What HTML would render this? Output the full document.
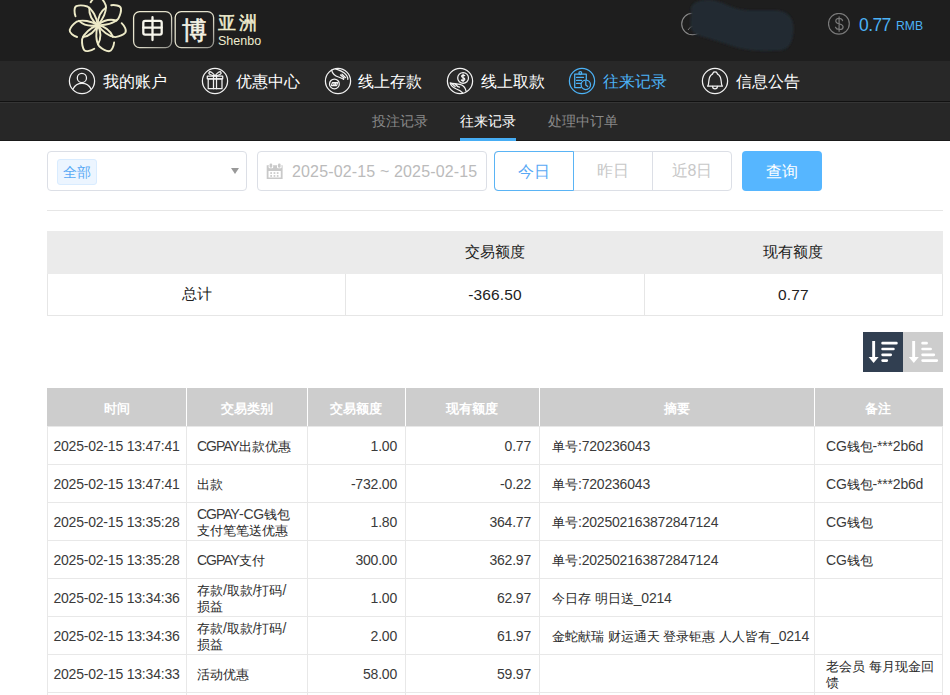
<!DOCTYPE html>
<html><head><meta charset="utf-8">
<style>
*{box-sizing:border-box;margin:0;padding:0}
html,body{width:950px;height:695px;overflow:hidden;background:#fff;font-family:"Liberation Sans",sans-serif;color:#333}
.abs{position:absolute}
#top{position:absolute;left:0;top:0;width:950px;height:61px;background:#1e1e1e}
#nav{position:absolute;left:0;top:61px;width:950px;height:40px;background:#282828}
#navline{position:absolute;left:0;top:101px;width:950px;height:1px;background:#111;box-shadow:0 1px 0 #353535}
#sub{position:absolute;left:0;top:102px;width:950px;height:39px;background:#272727;border-bottom:1px solid #1a1a1a}
.ni{position:absolute;top:67px;width:27px;height:27px}
.nt{position:absolute;top:71px;font-size:16px;line-height:22px;color:#fff;white-space:nowrap;letter-spacing:0;font-weight:500}
.st{position:absolute;top:110px;font-size:14px;line-height:22px;color:#8a8a8a;white-space:nowrap;font-weight:500}
.box{position:absolute;border:1px solid #dcdfe6;border-radius:4px;background:#fff}
.btn{position:absolute;top:151px;height:40px;font-size:16px;line-height:38px;padding-top:1px;text-align:center;color:#c8c8c8}
table{border-collapse:collapse;position:absolute}
#sum{left:47px;top:231px;width:896px;table-layout:fixed}
#sum td{border:1px solid #e6e6e6;height:42px;text-align:center;font-size:15px;color:#222}
#sum td.n{font-size:15.5px;letter-spacing:0.1px}
#sum tr.h td{background:#ebebeb;border-color:#ebebeb}
.th{position:absolute;top:388px;height:38px;line-height:38px;padding-top:2px;text-align:center;color:#fff;font-weight:bold;font-size:13px}
.td{position:absolute;font-size:14px;line-height:17px;color:#3a3a3a;white-space:nowrap;letter-spacing:-0.2px}
.td .z{font-size:13px;letter-spacing:0;line-height:10px;font-weight:500;color:#2a2a2a}
.tm{text-align:center}
.td.two{line-height:16px}
.cg{letter-spacing:-1px}
</style></head><body>
<div id="top"></div>
<div id="nav"></div>
<div id="sub"></div>
<div id="navline"></div>

<!-- logo -->
<svg class="abs" style="left:66px;top:0" width="64" height="58" viewBox="-31.8 -25 64 58">
 <g fill="none" stroke="#eeebc8" stroke-width="1.9" stroke-linecap="round">
  <g id="arm"><path d="M-22.3,-8.7 C-23.5,-12 -24,-17.5 -21.5,-18.8 C-19,-19.8 -13.5,-19.4 -10.4,-18.5 C-5,-15.5 -1.2,-7.5 0,0"/><path d="M0,0 C-4.5,-3.5 -9,-10 -8.5,-17.3"/></g>
  <use href="#arm" transform="rotate(51.43)"/><use href="#arm" transform="rotate(102.86)"/><use href="#arm" transform="rotate(154.29)"/><use href="#arm" transform="rotate(205.71)"/><use href="#arm" transform="rotate(257.14)"/><use href="#arm" transform="rotate(308.57)"/>
 </g>
</svg>
<svg class="abs" style="left:128px;top:6px" width="92" height="48" viewBox="128 6 92 48">
<defs><linearGradient id="bd" x1="0" y1="0" x2="1" y2="1"><stop offset="0" stop-color="#f3f0d6"/><stop offset="0.6" stop-color="#d8d6c4"/><stop offset="1" stop-color="#8e8e88"/></linearGradient></defs>
<rect x="133.6" y="11.6" width="38" height="36" rx="6" fill="none" stroke="url(#bd)" stroke-width="1.3"/>
<rect x="175.2" y="11.6" width="38.4" height="36" rx="6" fill="none" stroke="url(#bd)" stroke-width="1.3"/>
<g fill="none" stroke="#f7f6ec" stroke-width="2.3" stroke-linecap="round" stroke-linejoin="round">
<rect x="143.3" y="20.9" width="18.4" height="13.7" rx="1.8"/><path d="M143.3,27.6 H161.7 M152.5,17.2 V40"/>
</g></svg>
<div class="abs" style="left:181.5px;top:13.5px;font-size:25px;line-height:32px;color:#f4f2e4;-webkit-text-stroke:0.6px #f4f2e4">博</div>
<div class="abs" style="left:218px;top:12px;font-size:18px;line-height:22px;color:#f0edcf;letter-spacing:3px;-webkit-text-stroke:0.5px #f0edcf">亚洲</div>
<div class="abs" style="left:218px;top:33px;font-size:12.5px;line-height:16px;color:#f0edcf">Shenbo</div>

<!-- header right -->
<svg class="abs" style="left:670px;top:0" width="130" height="60" viewBox="670 0 130 60">
<defs><filter id="bl" x="-10%" y="-20%" width="120%" height="140%"><feGaussianBlur stdDeviation="1.2"/></filter>
<radialGradient id="bg1" cx="0.55" cy="0.5" r="0.6"><stop offset="0" stop-color="#1f2a32"/><stop offset="1" stop-color="#232a30"/></radialGradient></defs>
<circle cx="692.5" cy="24" r="10.8" fill="none" stroke="#8a8a8a" stroke-width="1.1"/>
<path d="M688,30 Q690,26 694,26" fill="none" stroke="#777" stroke-width="1"/>
<path filter="url(#bl)" fill="#212a31" d="M691,8 C693,2 700,-1 712,0 C725,2 732,9 745,10 C755,11 765,9.5 778,10.5 C790,12 794,20 793.5,30 C793,42 789,50 780,50.5 C765,51.5 750,51 738,48 C725,44 715,40 703,37 C693,35 690,30 690.5,22 Z"/>
</svg>
<svg class="abs" style="left:828px;top:13px" width="23" height="23" viewBox="0 0 23 23"><g fill="none" stroke="#7a7a7a" stroke-width="1.2" stroke-linecap="round"><circle cx="10.9" cy="10.8" r="10.4"/><path d="M14.6,7.6 C14,5.8 12.3,5.2 10.8,5.3 C8.9,5.4 7.7,6.5 7.8,8.2 C7.9,10.1 10,10.6 11.6,11 C13.6,11.5 15.2,12.2 15.1,14.1 C15,15.9 13.2,16.6 11.2,16.5 C9.3,16.4 8,15.6 7.5,14.2 M11.1,3.9 V18.3"/></g></svg>
<div class="abs" style="left:859px;top:13.5px;font-size:17.5px;line-height:22px;color:#4cb2f6;letter-spacing:-0.6px">0.77</div>
<div class="abs" style="left:896px;top:17px;font-size:12.2px;line-height:18px;color:#4cb2f6">RMB</div>

<!-- nav -->
<svg class="abs" style="left:66px;top:65px" width="32" height="32" viewBox="0 0 32 32"><g fill="none" stroke="#f2f2f2" stroke-width="1.25" stroke-linecap="round" stroke-linejoin="round"><circle cx="16" cy="16" r="12.6"/><circle cx="15.9" cy="12.9" r="4.6"/><path d="M7,23.9 A10,10 0 0 1 25,23.9"/></g></svg>
<svg class="abs" style="left:199px;top:65px" width="32" height="32" viewBox="0 0 32 32"><g fill="none" stroke="#f2f2f2" stroke-width="1.25" stroke-linecap="round" stroke-linejoin="round"><circle cx="16" cy="16" r="12.6"/><rect x="8.3" y="11" width="15.4" height="2.8"/><rect x="9.2" y="13.8" width="13.8" height="9.9"/><path d="M14.5,11V23.7M17.5,11V23.7"/><path d="M15.2,10.8 C12,10.5 9,9 10,7.3 C11,5.8 13.5,7.5 16,10.8 C18.5,7.5 21,5.8 22,7.3 C23,9 20,10.5 16.8,10.8"/></g></svg>
<svg class="abs" style="left:322px;top:65px" width="32" height="32" viewBox="0 0 32 32"><g fill="none" stroke="#f2f2f2" stroke-width="1.25" stroke-linecap="round" stroke-linejoin="round"><circle cx="16" cy="16" r="12.6"/><circle cx="12.4" cy="18.9" r="4.9"/><path d="M9.4,20.6 L10.4,17.6 H15.6 L14.6,20.6 Z M11.5,20.6 L12.3,17.8 M13,20.6 L13.8,17.8"/><path d="M9.6,5.2 C10.5,9 12.5,11 16.5,12 C19,12.6 20,13.5 21.6,14.4 M13.6,3.8 C16,4.8 19.5,6 22,7.8 C24.5,9.8 26,12 25.8,14.3 M18.5,10 L22,13 M20,9.2 L23.6,12.6"/></g></svg>
<svg class="abs" style="left:444px;top:65px" width="32" height="32" viewBox="0 0 32 32"><g fill="none" stroke="#f2f2f2" stroke-width="1.25" stroke-linecap="round" stroke-linejoin="round"><circle cx="16" cy="16" r="12.6"/><circle cx="19.1" cy="12.9" r="5.4"/><path d="M20.7,10.6 C20,9.7 17.6,9.8 17.6,11.3 C17.6,12.8 20.8,12.5 20.8,14.3 C20.8,15.8 18.2,16 17.4,15 M19.1,9 V16.8"/><path d="M6.2,17.8 C6.8,20.5 9,22.5 12.5,24 C15,25 17,26 18.4,27.6 M6.2,17.8 C9,18.6 12.5,18.6 16,19.4 C19.3,20.2 21.4,22.8 22.2,26.4 M7.6,18.6 L11.2,21.4 M10.2,18.6 L13.6,21.2 M13.2,21.4 L15.5,22.2"/></g></svg>
<svg class="abs" style="left:566px;top:65px" width="32" height="32" viewBox="0 0 32 32"><g fill="none" stroke="#4cb2f6" stroke-width="1.25" stroke-linecap="round" stroke-linejoin="round"><circle cx="16" cy="16" r="12.6"/><path d="M20.3,14.6 V9.2 H8.7 V22.6 H15"/><circle cx="14.3" cy="8.1" r="1.4"/><path d="M10.6,12.4 H17.5 M10.6,15.4 H15.5 M10.6,18.4 H14.5"/><circle cx="19.8" cy="19.8" r="4.7"/><path d="M19.8,16.3 V19.9 L21.7,21.5"/></g></svg>
<svg class="abs" style="left:699px;top:65px" width="32" height="32" viewBox="0 0 32 32"><g fill="none" stroke="#f2f2f2" stroke-width="1.25" stroke-linecap="round" stroke-linejoin="round"><circle cx="16" cy="16" r="12.6"/><path d="M8.6,21.2 H23.4 L22.6,19.5 C22,16 22.4,12.5 20.2,10.4 C19.2,9.5 18.4,9.4 18,8 C17.5,6.6 14.5,6.6 14,8 C13.6,9.4 12.8,9.5 11.8,10.4 C9.6,12.5 10,16 9.4,19.5 Z"/><path d="M13.6,21.4 A2.4,2.4 0 0 0 18.4,21.4"/></g></svg>
<div class="nt" style="left:103px">我的账户</div>
<div class="nt" style="left:236px">优惠中心</div>
<div class="nt" style="left:358px">线上存款</div>
<div class="nt" style="left:481px">线上取款</div>
<div class="nt" style="left:603px;color:#4cb2f6">往来记录</div>
<div class="nt" style="left:736px">信息公告</div>

<!-- sub nav -->
<div class="st" style="left:372px">投注记录</div>
<div class="st" style="left:460px;color:#fff">往来记录</div>
<div class="abs" style="left:460px;top:138px;width:56px;height:3px;background:#46adf4"></div>
<div class="st" style="left:548px">处理中订单</div>

<!-- filter row -->
<div class="box" style="left:47px;top:151px;width:200px;height:40px"></div>
<div class="abs" style="left:57px;top:159px;width:40px;height:26px;background:#ecf5ff;border:1px solid #d9ecff;border-radius:3px;font-size:14px;line-height:24px;color:#58a9f5;text-align:center">全部</div>
<div class="abs" style="left:231px;top:168px;width:0;height:0;border-left:4px solid transparent;border-right:4px solid transparent;border-top:6px solid #999"></div>

<div class="box" style="left:257px;top:151px;width:230px;height:40px"></div>
<svg class="abs" style="left:262px;top:158px" width="26" height="26" viewBox="0 0 26 26">
<path fill="#c9c9c9" fill-rule="evenodd" d="M4.7,7.3 H20.6 V21 H4.7 Z M6.5,13 V19.4 H18.8 V13 Z"/>
<g fill="#fff"><rect x="6.6" y="7" width="4.6" height="3.3" rx="1"/><rect x="15" y="7" width="4.6" height="3.3" rx="1"/></g>
<g fill="#c9c9c9"><rect x="7.6" y="5.6" width="2.6" height="4.2" rx="1.2"/><rect x="16" y="5.6" width="2.6" height="4.2" rx="1.2"/>
<rect x="8.3" y="14.2" width="1.7" height="1.7"/><rect x="11.6" y="14.2" width="1.7" height="1.7"/><rect x="14.8" y="14.2" width="1.7" height="1.7"/>
<rect x="8.3" y="17.1" width="1.7" height="1.7"/><rect x="11.6" y="17.1" width="1.7" height="1.7"/><rect x="14.8" y="17.1" width="1.7" height="1.7"/></g>
</svg>
<div class="abs" style="left:292px;top:161px;font-size:16px;line-height:22px;color:#bbb;white-space:nowrap;letter-spacing:0.15px">2025-02-15 ~ 2025-02-15</div>

<div class="box" style="left:494px;top:151px;width:238px;height:40px"></div>
<div class="abs" style="left:573px;top:152px;width:1px;height:38px;background:#dcdfe6"></div>
<div class="abs" style="left:652px;top:152px;width:1px;height:38px;background:#dcdfe6"></div>
<div class="btn" style="left:494px;width:80px;border:1px solid #5ab4f5;border-radius:4px 0 0 4px;color:#58a9f5">今日</div>
<div class="btn" style="left:573px;width:80px">昨日</div>
<div class="btn" style="left:652px;width:80px">近8日</div>
<div class="btn" style="left:742px;width:80px;background:#56b6ff;border-radius:4px;color:#fff;line-height:40px">查询</div>

<div class="abs" style="left:47px;top:210px;width:896px;height:1px;background:#e6e6e6"></div>

<table id="sum">
<tr class="h"><td></td><td>交易额度</td><td>现有额度</td></tr>
<tr><td>总计</td><td class="n">-366.50</td><td class="n">0.77</td></tr>
</table>

<svg class="abs" style="left:863px;top:332px" width="80" height="40" viewBox="0 0 80 40">
<rect x="0" y="0" width="40" height="40" fill="#313f51"/><rect x="40" y="0" width="40" height="40" fill="#cdcdcd"/>
<g fill="#fff"><rect x="9.2" y="9" width="2.9" height="17"/><path d="M5.6,25 H15.6 L10.6,31 Z"/>
<rect x="49.2" y="9" width="2.9" height="17"/><path d="M45.8,25 H55.8 L50.8,31 Z"/></g>
<g stroke="#fff" stroke-width="2.7" stroke-linecap="round">
<path d="M19.6,11.2 H33.4 M19.6,17 H30.4 M19.6,22.8 H27.7 M19.6,28.6 H23.8"/>
<path d="M59.6,11.2 H63.6 M59.6,17 H67.6 M59.6,22.8 H70.8 M59.6,28.6 H73.8"/>
</g></svg>

<!-- main table -->
<div class="abs" style="left:47px;top:388px;width:896px;height:38px;background:#cdcdcd"></div>
<div class="th" style="left:47px;width:139px">时间</div>
<div class="th" style="left:186px;width:121px">交易类别</div>
<div class="abs" style="left:186px;top:388px;width:1px;height:38px;background:#fff"></div>
<div class="th" style="left:307px;width:98px">交易额度</div>
<div class="abs" style="left:307px;top:388px;width:1px;height:38px;background:#fff"></div>
<div class="th" style="left:405px;width:134px">现有额度</div>
<div class="abs" style="left:405px;top:388px;width:1px;height:38px;background:#fff"></div>
<div class="th" style="left:539px;width:275px">摘要</div>
<div class="abs" style="left:539px;top:388px;width:1px;height:38px;background:#fff"></div>
<div class="th" style="left:814px;width:128px">备注</div>
<div class="abs" style="left:814px;top:388px;width:1px;height:38px;background:#fff"></div>
<div class="td tm" style="left:47px;width:139px;top:438px">2025-02-15 13:47:41</div>
<div class="td" style="left:197px;top:438px"><span class=cg>CGPAY</span><span class="z">出款优惠</span></div>
<div class="td" style="right:553px;top:438px;text-align:right">1.00</div>
<div class="td" style="right:419px;top:438px;text-align:right">0.77</div>
<div class="td" style="left:552px;top:438px"><span class="z">单号</span>:720236043</div>
<div class="td" style="left:826px;top:438px">CG<span class="z">钱包</span>-***2b6d</div>
<div class="td tm" style="left:47px;width:139px;top:476px">2025-02-15 13:47:41</div>
<div class="td" style="left:197px;top:476px"><span class="z">出款</span></div>
<div class="td" style="right:553px;top:476px;text-align:right">-732.00</div>
<div class="td" style="right:419px;top:476px;text-align:right">-0.22</div>
<div class="td" style="left:552px;top:476px"><span class="z">单号</span>:720236043</div>
<div class="td" style="left:826px;top:476px">CG<span class="z">钱包</span>-***2b6d</div>
<div class="td tm" style="left:47px;width:139px;top:514px">2025-02-15 13:35:28</div>
<div class="td two" style="left:197px;top:506px"><span class=cg>CGPAY</span>-CG<span class="z">钱包</span><br><span class="z">支付笔笔送优惠</span></div>
<div class="td" style="right:553px;top:514px;text-align:right">1.80</div>
<div class="td" style="right:419px;top:514px;text-align:right">364.77</div>
<div class="td" style="left:552px;top:514px"><span class="z">单号</span>:202502163872847124</div>
<div class="td" style="left:826px;top:514px">CG<span class="z">钱包</span></div>
<div class="td tm" style="left:47px;width:139px;top:552px">2025-02-15 13:35:28</div>
<div class="td" style="left:197px;top:552px"><span class=cg>CGPAY</span><span class="z">支付</span></div>
<div class="td" style="right:553px;top:552px;text-align:right">300.00</div>
<div class="td" style="right:419px;top:552px;text-align:right">362.97</div>
<div class="td" style="left:552px;top:552px"><span class="z">单号</span>:202502163872847124</div>
<div class="td" style="left:826px;top:552px">CG<span class="z">钱包</span></div>
<div class="td tm" style="left:47px;width:139px;top:590px">2025-02-15 13:34:36</div>
<div class="td two" style="left:197px;top:582px"><span class="z">存款</span>/<span class="z">取款</span>/<span class="z">打码</span>/<br><span class="z">损益</span></div>
<div class="td" style="right:553px;top:590px;text-align:right">1.00</div>
<div class="td" style="right:419px;top:590px;text-align:right">62.97</div>
<div class="td" style="left:552px;top:590px"><span class="z">今日存</span> <span class="z">明日送</span>_0214</div>
<div class="td tm" style="left:47px;width:139px;top:628px">2025-02-15 13:34:36</div>
<div class="td two" style="left:197px;top:620px"><span class="z">存款</span>/<span class="z">取款</span>/<span class="z">打码</span>/<br><span class="z">损益</span></div>
<div class="td" style="right:553px;top:628px;text-align:right">2.00</div>
<div class="td" style="right:419px;top:628px;text-align:right">61.97</div>
<div class="td" style="left:552px;top:628px"><span class="z">金蛇献瑞</span> <span class="z">财运通天</span> <span class="z">登录钜惠</span> <span class="z">人人皆有</span>_0214</div>
<div class="td tm" style="left:47px;width:139px;top:666px">2025-02-15 13:34:33</div>
<div class="td" style="left:197px;top:666px"><span class="z">活动优惠</span></div>
<div class="td" style="right:553px;top:666px;text-align:right">58.00</div>
<div class="td" style="right:419px;top:666px;text-align:right">59.97</div>
<div class="td two" style="left:826px;top:658px"><span class="z">老会员</span> <span class="z">每月现金回</span><br><span class="z">馈</span></div>
<div class="abs" style="left:47px;top:426px;width:896px;height:1px;background:#e8e8e8"></div>
<div class="abs" style="left:47px;top:464px;width:896px;height:1px;background:#e8e8e8"></div>
<div class="abs" style="left:47px;top:502px;width:896px;height:1px;background:#e8e8e8"></div>
<div class="abs" style="left:47px;top:540px;width:896px;height:1px;background:#e8e8e8"></div>
<div class="abs" style="left:47px;top:578px;width:896px;height:1px;background:#e8e8e8"></div>
<div class="abs" style="left:47px;top:616px;width:896px;height:1px;background:#e8e8e8"></div>
<div class="abs" style="left:47px;top:654px;width:896px;height:1px;background:#e8e8e8"></div>
<div class="abs" style="left:47px;top:692px;width:896px;height:1px;background:#e8e8e8"></div>
<div class="abs" style="left:47px;top:426px;width:1px;height:269px;background:#e8e8e8"></div>
<div class="abs" style="left:186px;top:426px;width:1px;height:269px;background:#e8e8e8"></div>
<div class="abs" style="left:307px;top:426px;width:1px;height:269px;background:#e8e8e8"></div>
<div class="abs" style="left:405px;top:426px;width:1px;height:269px;background:#e8e8e8"></div>
<div class="abs" style="left:539px;top:426px;width:1px;height:269px;background:#e8e8e8"></div>
<div class="abs" style="left:814px;top:426px;width:1px;height:269px;background:#e8e8e8"></div>
<div class="abs" style="left:942px;top:426px;width:1px;height:269px;background:#e8e8e8"></div>
<!-- /main table -->
</body></html>
